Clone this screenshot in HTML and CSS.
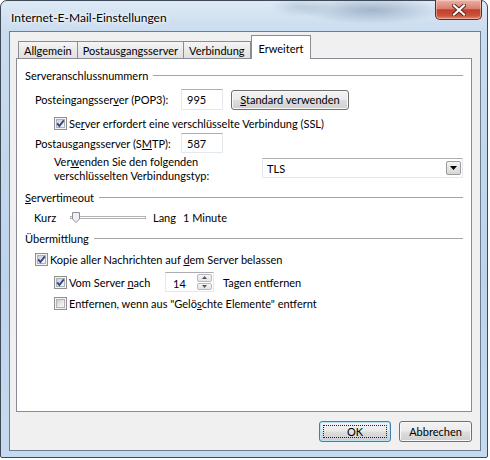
FILE: index.html
```html
<!DOCTYPE html>
<html lang="de">
<head>
    <meta charset="UTF-8">
    <title>Internet-E-Mail-Einstellungen</title>
    <link rel="stylesheet" href="styles.css">
</head>
<body>
<div class="window">
    <div class="titlebar">
        <span class="title">Internet-E-Mail-Einstellungen</span>
        <span class="close-btn">
            <svg width="14" height="12" viewBox="0 0 14 12">
                <path d="M2 1.5 L12 10.5 M12 1.5 L2 10.5" stroke="#5a2218" stroke-width="4" stroke-linecap="square"/>
                <path d="M2 1.5 L12 10.5 M12 1.5 L2 10.5" stroke="#fff" stroke-width="2.2" stroke-linecap="square"/>
            </svg>
        </span>
    </div>

    <div class="client">
        <div class="tabs">
            <span class="tab">Allgemein</span>
            <span class="tab">Postausgangsserver</span>
            <span class="tab">Verbindung</span>
            <span class="tab active">Erweitert</span>
        </div>

        <div class="panel">
            <div class="group-head group-ports"><span>Serveranschlussnummern</span></div>

            <div class="row row-pop">
                <span class="field-label">Posteingangsser<u>v</u>er (POP3):</span>
                <span class="textbox">995</span>
                <span class="button std-btn"><span><u>S</u>tandard verwenden</span></span>
            </div>

            <div class="row row-ssl indent">
                <span class="check on">
                    <svg width="11" height="11" viewBox="0 0 11 11"><path d="M2.2 5.3 L4.4 8 L8.8 2.4" stroke="#34458a" stroke-width="1.9" fill="none"/></svg>
                </span>
                <span>Se<u>r</u>ver erfordert eine verschlüsselte Verbindung (SSL)</span>
            </div>

            <div class="row row-smtp">
                <span class="field-label">Postausgangsserver (S<u>M</u>TP):</span>
                <span class="textbox">587</span>
            </div>

            <div class="row row-enc indent">
                <span class="enc-label">Ver<u>w</u>enden Sie den folgenden<br>verschlüsselten Verbindungstyp:</span>
                <span class="select">
                    <span class="select-value">TLS</span>
                    <span class="select-drop">
                        <svg width="7" height="4" viewBox="0 0 7 4"><path d="M0 0 H7 L3.5 4 Z" fill="#000"/></svg>
                    </span>
                </span>
            </div>

            <div class="group-head group-timeout"><span><u>S</u>ervertimeout</span></div>

            <div class="row row-slider">
                <span class="slider-min">Kurz</span>
                <svg class="slider" width="76" height="14" viewBox="0 0 76 14">
                    <rect x="0.5" y="6.5" width="75" height="2" fill="#fff" stroke="#b4b4b4"/>
                    <path d="M2.5 2.5 H9.5 V9 L6 12.5 L2.5 9 Z" fill="#eef0f3" stroke="#8a8f96"/>
                </svg>
                <span class="slider-max">Lang</span>
                <span class="slider-value">1 Minute</span>
            </div>

            <div class="group-head group-delivery"><span>Übermittlung</span></div>

            <div class="row row-copy">
                <span class="check on">
                    <svg width="11" height="11" viewBox="0 0 11 11"><path d="M2.2 5.3 L4.4 8 L8.8 2.4" stroke="#34458a" stroke-width="1.9" fill="none"/></svg>
                </span>
                <span>Kopie aller Nachrichten auf <u>d</u>em Server belassen</span>
            </div>

            <div class="row row-days indent">
                <span class="check on">
                    <svg width="11" height="11" viewBox="0 0 11 11"><path d="M2.2 5.3 L4.4 8 L8.8 2.4" stroke="#34458a" stroke-width="1.9" fill="none"/></svg>
                </span>
                <span class="days-label">Vom Server <u>n</u>ach</span>
                <span class="spinner">
                    <span class="spinner-value">14</span>
                    <span class="spin-buttons">
                        <span class="spin"><svg width="5" height="3" viewBox="0 0 5 3"><path d="M0 3 H5 L2.5 0 Z" fill="#555"/></svg></span>
                        <span class="spin"><svg width="5" height="3" viewBox="0 0 5 3"><path d="M0 0 H5 L2.5 3 Z" fill="#555"/></svg></span>
                    </span>
                </span>
                <span>Tagen entfernen</span>
            </div>

            <div class="row row-remove indent">
                <span class="check"></span>
                <span>Entfernen, wenn aus "Gelö<u>s</u>chte Elemente" entfernt</span>
            </div>
        </div>

        <div class="dialog-buttons">
            <span class="button btn-ok default"><span>OK</span></span>
            <span class="button btn-cancel"><span>Abbrechen</span></span>
        </div>
    </div>
</div>
</body>
</html>
```

FILE: styles.css
```css
body {
    margin: 0;
    background: #fff;
    font-family: Lato, "Open Sans", sans-serif;
    font-size: 11px;
    color: #000;
}

/* aero frame */
.window {
    width: 488px;
    height: 458px;
    box-sizing: border-box;
    border: 1px solid #3e4a57;
    border-radius: 7px 7px 2px 2px;
    padding: 0 6px 6px 8px;
    display: flex;
    flex-direction: column;
    background:
        radial-gradient(ellipse 70px 14px at 370px 9px, rgba(96, 122, 152, 0.45), transparent),
        radial-gradient(ellipse 30px 10px at 300px 6px, rgba(120, 145, 170, 0.3), transparent),
        linear-gradient(#dde9f5, #cadcef 30px, #bed4eb 60%, #c6daef);
}
.titlebar {
    height: 30px;
    display: flex;
    align-items: flex-start;
    flex: none;
}
.title {
    margin: 9px 0 0 2px;
    font-size: 12px;
    line-height: 16px;
    text-shadow: 0 0 6px #fff, 0 0 3px #fff;
}
.close-btn {
    margin: -1px -1px 0 auto;
    width: 47px;
    height: 20px;
    box-sizing: border-box;
    border: 1px solid #5f2a22;
    border-top: none;
    border-radius: 0 0 5px 5px;
    background: linear-gradient(#ebb3a6, #da7f6f 45%, #c0402f 52%, #cc5038 80%, #e0876c);
    box-shadow: inset 0 0 0 1px rgba(255, 220, 210, 0.5);
    display: flex;
    align-items: center;
    justify-content: center;
}

.client {
    flex: 1;
    border: 1px solid #6c7d91;
    background: #f0f0f0;
    display: flex;
    flex-direction: column;
    padding: 0 8px 0 6px;
}

/* tab strip */
.tabs {
    height: 26px;
    display: flex;
    align-items: flex-end;
    padding-left: 2px;
    flex: none;
}
.tab {
    height: 16px;
    padding: 0 5px;
    border: 1px solid #898c95;
    border-bottom: none;
    margin-right: -1px;
    background: linear-gradient(#f5f5f5, #e9e9e9 50%, #e1e1e1);
    display: flex;
    align-items: center;
}
.tab.active {
    height: 22px;
    padding: 1px 7px 0;
    margin: 0 0 -1px 1px;
    background: #fff;
    position: relative;
    z-index: 1;
}

.panel {
    height: 354px;
    box-sizing: border-box;
    border: 1px solid #898c95;
    background: #fff;
    padding: 9px 8px 0 0;
    flex: none;
}

.group-head {
    height: 14px;
    display: flex;
    align-items: center;
    padding-left: 8px;
}
.group-head::after {
    content: "";
    flex: 1;
    height: 1px;
    background: #a5a5a5;
    margin-left: 5px;
}
.group-timeout { margin-top: 7px; }
.group-delivery { margin-top: 5px; }

.row {
    display: flex;
    align-items: center;
    padding-left: 18px;
}
.row.indent { padding-left: 37px; }

.field-label { width: 146px; flex: none; }

.row-pop { height: 21px; margin-top: 7px; }
.row-ssl { height: 14px; margin-top: 6px; }
.row-smtp { height: 20px; margin-top: 3px; }
.row-enc { height: 28px; margin-top: 2px; align-items: flex-start; }
.row-slider { height: 18px; margin-top: 4px; padding-left: 17px; }
.row-copy { height: 14px; margin-top: 7px; }
.row-days { height: 20px; margin-top: 6px; }
.row-remove { height: 14px; margin-top: 4px; }

/* inputs */
.textbox,
.select,
.spinner {
    box-sizing: border-box;
    background: #fff;
    border: 1px solid #e3e9ef;
    border-top-color: #abadb3;
    display: flex;
    align-items: center;
}
.textbox {
    width: 42px;
    height: 21px;
    padding-left: 5px;
}
.row-smtp .textbox { height: 20px; }

.button {
    box-sizing: border-box;
    height: 21px;
    border: 1px solid #707070;
    border-radius: 3px;
    background: linear-gradient(#f2f2f2, #ebebeb 48%, #dddddd 52%, #cfcfcf);
    box-shadow: inset 0 0 0 1px #f8f8f8;
    display: flex;
    align-items: center;
    justify-content: center;
    position: relative;
}
.std-btn {
    width: 118px;
    height: 20px;
    margin-left: 8px;
}

.check {
    width: 13px;
    height: 13px;
    box-sizing: border-box;
    border: 1px solid #8e8f8f;
    background: #f4f4f4;
    display: grid;
    flex: none;
    margin-right: 2px;
}
.check::before {
    content: "";
    grid-area: 1 / 1;
    margin: 1px;
    border: 1px solid #adb2b9;
    background: linear-gradient(135deg, #c9ced5, #eef0f2 70%, #f7f7f7);
}
.check svg { grid-area: 1 / 1; }

.enc-label {
    width: 208px;
    line-height: 14px;
    flex: none;
}
.select {
    width: 201px;
    height: 20px;
    margin-top: 3px;
    padding: 0 1px 0 4px;
}
.select-value { flex: 1; }
.select-drop {
    width: 15px;
    height: 14px;
    box-sizing: border-box;
    border: 1px solid #9c9c9c;
    border-radius: 2px;
    background: linear-gradient(#f4f4f4, #e4e4e4 50%, #d6d6d6);
    display: flex;
    align-items: center;
    justify-content: center;
}

.slider-min { width: 36px; flex: none; }
.slider { flex: none; }
.slider-max { margin-left: 7px; }
.slider-value { margin-left: 7px; }

.days-label { width: 96px; flex: none; }
.spinner {
    width: 49px;
    height: 20px;
    padding: 1px 1px 1px 7px;
    margin-right: 9px;
}
.spinner-value { flex: 1; padding-top: 2px; }
.spin-buttons {
    width: 15px;
    height: 100%;
    display: flex;
    flex-direction: column;
    gap: 1px;
}
.spin {
    flex: 1;
    box-sizing: border-box;
    border: 1px solid #b6b9bd;
    border-radius: 2px;
    background: linear-gradient(#f6f6f6, #e2e3e5);
    display: flex;
    align-items: center;
    justify-content: center;
}

/* OK / Abbrechen */
.dialog-buttons {
    display: flex;
    justify-content: flex-end;
    gap: 8px;
    margin-top: 9px;
}
.btn-ok { width: 72px; }
.btn-cancel { width: 73px; }
.button.default {
    border-color: #3c7fb1;
    box-shadow: inset 0 0 0 1px #bfe2f5;
}
.button.default::after {
    content: "";
    position: absolute;
    inset: 3px;
    border: 1px dotted #222;
    border-radius: 1px;
}
```
